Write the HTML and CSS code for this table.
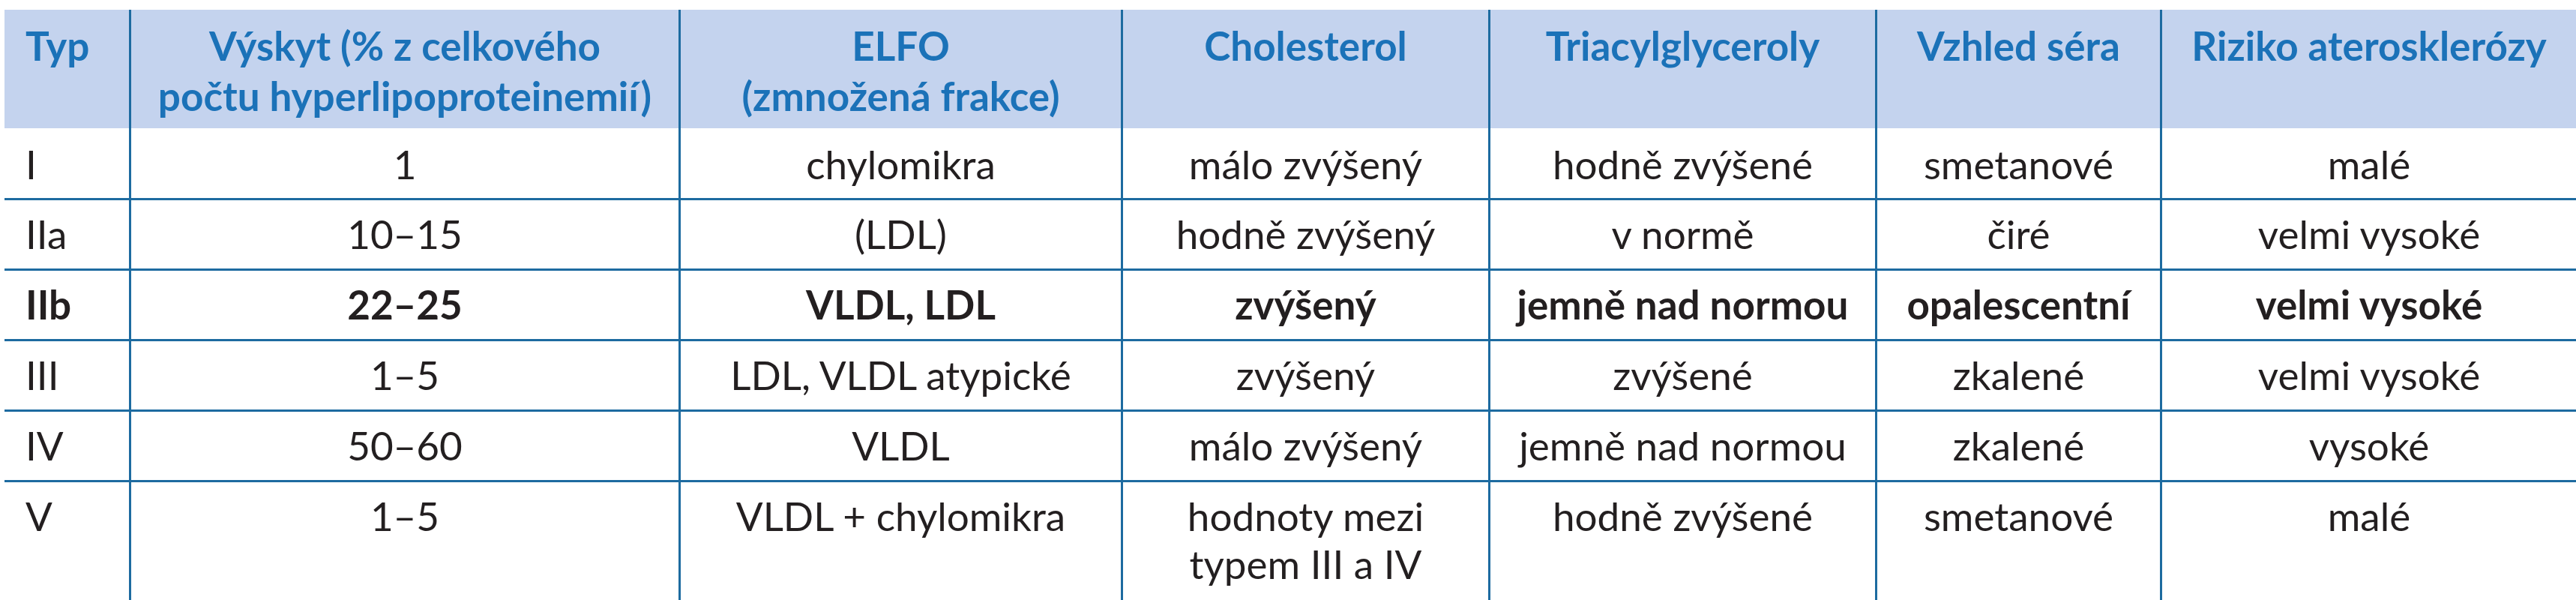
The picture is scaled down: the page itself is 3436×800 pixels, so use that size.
FILE: index.html
```html
<!DOCTYPE html>
<html lang="cs">
<head>
<meta charset="utf-8">
<title>Typy hyperlipoproteinemií</title>
<link rel="stylesheet" href="styles.css">
</head>
<body>
<div class="table" role="table">
  <div class="row head" role="row">
    <div class="cell" role="columnheader">Typ</div>
    <div class="cell" role="columnheader">Výskyt (% z celkového<br>počtu hyperlipoproteinemií)</div>
    <div class="cell" role="columnheader">ELFO<br>(zmnožená frakce)</div>
    <div class="cell" role="columnheader">Cholesterol</div>
    <div class="cell" role="columnheader">Triacylglyceroly</div>
    <div class="cell" role="columnheader">Vzhled séra</div>
    <div class="cell" role="columnheader">Riziko aterosklerózy</div>
  </div>
  <div class="row body first" role="row">
    <div class="cell" role="cell">I</div>
    <div class="cell" role="cell">1</div>
    <div class="cell" role="cell">chylomikra</div>
    <div class="cell" role="cell">málo zvýšený</div>
    <div class="cell" role="cell">hodně zvýšené</div>
    <div class="cell" role="cell">smetanové</div>
    <div class="cell" role="cell">malé</div>
  </div>
  <div class="row body" role="row">
    <div class="cell" role="cell">IIa</div>
    <div class="cell" role="cell">10–15</div>
    <div class="cell" role="cell">(LDL)</div>
    <div class="cell" role="cell">hodně zvýšený</div>
    <div class="cell" role="cell">v normě</div>
    <div class="cell" role="cell">čiré</div>
    <div class="cell" role="cell">velmi vysoké</div>
  </div>
  <div class="row body strong" role="row">
    <div class="cell" role="cell">IIb</div>
    <div class="cell" role="cell">22–25</div>
    <div class="cell" role="cell">VLDL, LDL</div>
    <div class="cell" role="cell">zvýšený</div>
    <div class="cell" role="cell">jemně nad normou</div>
    <div class="cell" role="cell">opalescentní</div>
    <div class="cell" role="cell">velmi vysoké</div>
  </div>
  <div class="row body" role="row">
    <div class="cell" role="cell">III</div>
    <div class="cell" role="cell">1–5</div>
    <div class="cell" role="cell">LDL, VLDL atypické</div>
    <div class="cell" role="cell">zvýšený</div>
    <div class="cell" role="cell">zvýšené</div>
    <div class="cell" role="cell">zkalené</div>
    <div class="cell" role="cell">velmi vysoké</div>
  </div>
  <div class="row body" role="row">
    <div class="cell" role="cell">IV</div>
    <div class="cell" role="cell">50–60</div>
    <div class="cell" role="cell">VLDL</div>
    <div class="cell" role="cell">málo zvýšený</div>
    <div class="cell" role="cell">jemně nad normou</div>
    <div class="cell" role="cell">zkalené</div>
    <div class="cell" role="cell">vysoké</div>
  </div>
  <div class="row body last" role="row">
    <div class="cell" role="cell">V</div>
    <div class="cell" role="cell">1–5</div>
    <div class="cell" role="cell">VLDL + chylomikra</div>
    <div class="cell" role="cell">hodnoty mezi<br>typem III a IV</div>
    <div class="cell" role="cell">hodně zvýšené</div>
    <div class="cell" role="cell">smetanové</div>
    <div class="cell" role="cell">malé</div>
  </div>
</div>
</body>
</html>
```
FILE: styles.css
```css
html, body {
  margin: 0;
  padding: 0;
  background: #ffffff;
}

body {
  font-family: Lato, "Open Sans", "Liberation Sans", sans-serif;
  font-size: 53px;
  color: #231f20;
}

.table {
  margin: 13px 0 0 6px;
  width: 3430px;
}

.row {
  display: grid;
  grid-template-columns: 166px 733px 590px 490px 516px 380px 555px;
}

.cell {
  box-sizing: border-box;
  border-left: 3px solid #1d6ba0;
  text-align: center;
  line-height: 64px;
  white-space: nowrap;
}

.cell:first-child {
  border-left: 0;
  text-align: left;
  padding-left: 28px;
}

.head {
  background: #c4d3ee;
  color: #1b72b8;
  font-weight: 700;
}

.head .cell {
  padding-top: 14px;
  padding-bottom: 10px;
  line-height: 67px;
}

.body .cell {
  padding-top: 13px;
  padding-bottom: 14px;
}

.body {
  border-top: 3px solid #1d6ba0;
}

.body.first {
  border-top: 0;
}

.body.first .cell {
  padding-top: 16px;
  padding-bottom: 13px;
}

.strong {
  font-weight: 700;
}

.last {
  height: 160px;
  box-sizing: border-box;
}
```
